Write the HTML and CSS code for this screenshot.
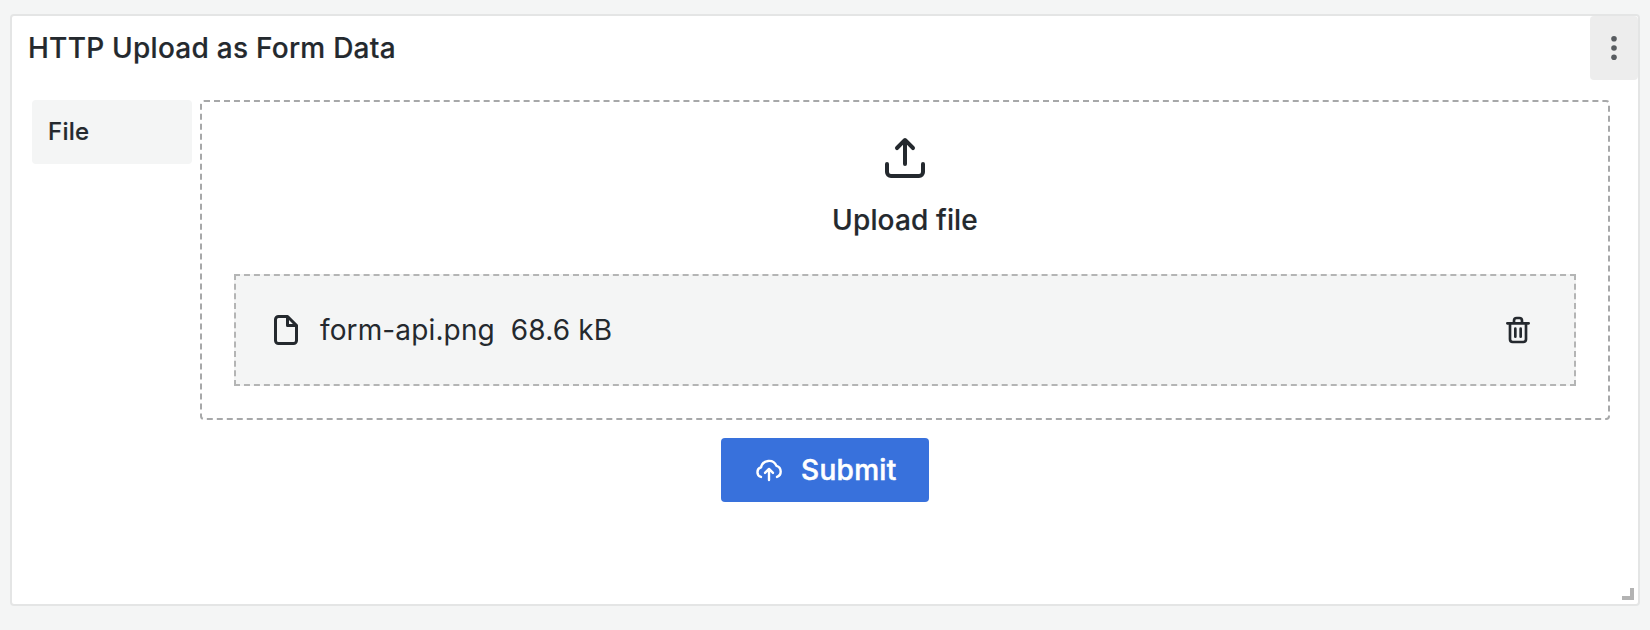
FILE: index.html
```html
<!DOCTYPE html>
<html lang="en">
<head>
<meta charset="utf-8">
<title>HTTP Upload as Form Data</title>
<link rel="stylesheet" href="styles.css">
</head>
<body>
<section class="panel">
  <header class="panel-header">
    <h2 class="panel-title">HTTP Upload as Form Data</h2>
    <button class="menu-button" aria-label="Menu">
      <svg width="32" height="32" viewBox="0 0 32 32"><circle cx="16" cy="6.7" r="2.8"/><circle cx="16" cy="16" r="2.8"/><circle cx="16" cy="25.3" r="2.8"/></svg>
    </button>
  </header>
  <form class="panel-content">
    <div class="field">
      <label class="field-label">File</label>
      <div class="dropzone">
        <svg class="upload-icon" width="48" height="48" viewBox="0 0 24 24"><path d="M8.71,7.71,11,5.41V15a1,1,0,0,0,2,0V5.41l2.29,2.3a1,1,0,0,0,1.42,0,1,1,0,0,0,0-1.42l-4-4a1,1,0,0,0-.33-.21,1,1,0,0,0-.76,0,1,1,0,0,0-.33.21l-4,4A1,1,0,1,0,8.71,7.71ZM21,14a1,1,0,0,0-1,1v4a1,1,0,0,1-1,1H5a1,1,0,0,1-1-1V15a1,1,0,0,0-2,0v4a3,3,0,0,0,3,3H19a3,3,0,0,0,3-3V15A1,1,0,0,0,21,14Z"/></svg>
        <div class="dropzone-text">Upload file</div>
        <div class="file-item">
          <svg width="36" height="36" viewBox="0 0 24 24"><path d="M20,8.94a1.31,1.31,0,0,0-.06-.27l0-.09a1.07,1.07,0,0,0-.19-.28h0l-6-6h0a1.07,1.07,0,0,0-.28-.19.32.32,0,0,0-.09,0A.88.88,0,0,0,13.05,2H7A3,3,0,0,0,4,5V19a3,3,0,0,0,3,3H17a3,3,0,0,0,3-3V9S20,9,20,8.94ZM14,5.41,16.59,8H14ZM18,19a1,1,0,0,1-1,1H7a1,1,0,0,1-1-1V5A1,1,0,0,1,7,4h5V9a1,1,0,0,0,1,1h5Z"/></svg>
          <span class="file-name">form-api.png</span>
          <span class="file-size">68.6 kB</span>
          <svg class="remove-icon" width="32" height="32" viewBox="0 0 24 24"><path d="M10,18a1,1,0,0,0,1-1V11a1,1,0,0,0-2,0v6A1,1,0,0,0,10,18ZM20,6H16V5a3,3,0,0,0-3-3H11A3,3,0,0,0,8,5V6H4A1,1,0,0,0,4,8H5V19a3,3,0,0,0,3,3h8a3,3,0,0,0,3-3V8h1a1,1,0,0,0,0-2ZM10,5a1,1,0,0,1,1-1h2a1,1,0,0,1,1,1V6H10Zm7,14a1,1,0,0,1-1,1H8a1,1,0,0,1-1-1V8H17Zm-3-1a1,1,0,0,0,1-1V11a1,1,0,0,0-2,0v6A1,1,0,0,0,14,18Z"/></svg>
        </div>
      </div>
    </div>
    <button class="submit" type="button">
      <svg class="submit-icon" width="32" height="32" viewBox="0 0 24 24"><path d="M6 17.2A3.7 3.7 0 0 1 6 10.1A6.1 6.1 0 0 1 17.6 8.9A4.4 4.4 0 0 1 18 17.2"/><path d="M12 19.5v-7.6M9 14.2l3-3 3 3"/></svg>
      <span>Submit</span>
    </button>
  </form>
  <span class="resize-handle"></span>
</section>
</body>
</html>
```
FILE: styles.css
```css
* {
  box-sizing: border-box;
}

body {
  margin: 0;
  height: 630px;
  padding: 14px 10px 24px;
  background: #f4f5f5;
  color: #24292e;
  font-family: Inter, "Liberation Sans", sans-serif;
  font-size: 28px;
  letter-spacing: 0.25px;
}

svg {
  display: block;
  flex: none;
  fill: currentColor;
}

button {
  border: 0;
  font: inherit;
  letter-spacing: inherit;
}

.panel {
  position: relative;
  height: 592px;
  background: #fff;
  border: 2px solid #e4e5e5;
  border-radius: 4px;
}

.panel-header {
  display: flex;
  align-items: center;
  justify-content: space-between;
  height: 64px;
  padding-left: 16px;
}

.panel-title {
  margin: 0;
  font-size: 28px;
  font-weight: 500;
  -webkit-text-stroke: 0.2px currentColor;
}

.menu-button {
  display: flex;
  align-items: center;
  justify-content: center;
  width: 48px;
  height: 64px;
  padding: 0;
  border-radius: 4px;
  background: #ededed;
  color: #585c60;
}

.panel-content {
  display: flex;
  flex-direction: column;
  align-items: center;
  gap: 18px;
  padding: 20px 28px 0 20px;
}

.field {
  display: flex;
  align-items: flex-start;
  gap: 8px;
  width: 100%;
}

.field-label {
  display: flex;
  align-items: center;
  width: 160px;
  height: 64px;
  padding: 0 0 2px 16px;
  border-radius: 4px;
  background: #f4f5f5;
  font-size: 24px;
  font-weight: 500;
  -webkit-text-stroke: 0.2px currentColor;
}

.dropzone {
  display: flex;
  flex: 1;
  flex-direction: column;
  align-items: center;
  height: 320px;
  padding: 32px;
  border: 2px dashed #a7a8a9;
  border-radius: 4px;
}

.dropzone-text {
  margin-top: 16px;
  font-weight: 500;
  letter-spacing: 0.15px;
  line-height: 44px;
  -webkit-text-stroke: 0.2px currentColor;
}

.file-item {
  display: flex;
  align-items: center;
  width: 100%;
  height: 112px;
  margin-top: 32px;
  padding: 0 40px 0 32px;
  border: 2px dashed #b4b5b5;
  background: #f4f5f5;
  letter-spacing: 0.13px;
}

.file-name {
  margin: 0 16px;
}

.remove-icon {
  margin-left: auto;
}

.submit {
  display: flex;
  align-items: center;
  gap: 16px;
  width: 208px;
  height: 64px;
  margin-left: 8px;
  padding: 0 32px;
  border-radius: 4px;
  background: #3871dc;
  color: #fff;
  font-weight: 500;
  letter-spacing: 0.3px;
  -webkit-text-stroke: 0.5px currentColor;
}

.submit-icon {
  fill: none;
  stroke: currentColor;
  stroke-width: 1.8;
  stroke-linecap: round;
  stroke-linejoin: round;
}

.resize-handle {
  position: absolute;
  right: 4px;
  bottom: 4px;
  width: 12px;
  height: 12px;
  border: solid #b3b3b3;
  border-width: 0 4px 4px 0;
}
```
